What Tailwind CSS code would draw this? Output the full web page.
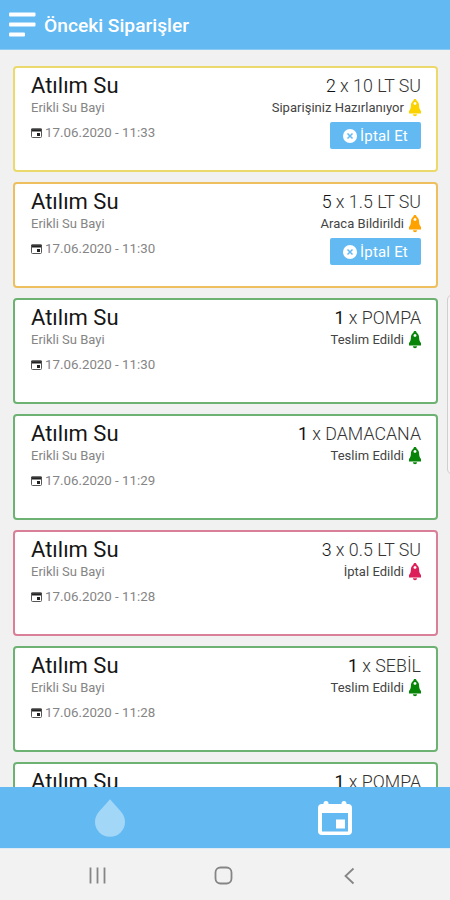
<!DOCTYPE html>
<html lang="tr">
<head>
    <meta charset="UTF-8">
    <meta name="viewport" content="width=device-width, initial-scale=1.0">
    <title>Önceki Siparişler</title>
    <script src="https://cdn.jsdelivr.net/npm/@tailwindcss/browser@4"></script>
</head>
<body class="bg-[#f1f1f1] font-['Roboto',sans-serif]">

    <div class="relative flex flex-col w-[450px] h-[900px] overflow-hidden">
        <!-- Header -->
        <header class="flex shrink-0 items-center h-[50px] bg-[#63b9f2] border-b border-[#8ecbf4] pl-[9px] gap-[9px]">
            <svg class="w-[27px] h-[25px]" viewBox="0 0 27 25" fill="#fff">
                <rect x="0" y="0.500" width="26.5" height="4" rx="1" />
                <rect x="0" y="10.500" width="26.5" height="4" rx="1" />
                <rect x="0" y="20.500" width="16" height="4" rx="1" />
            </svg>
            <h1 class="-ml-px pt-[2px] text-[19.2px] leading-6 font-medium text-white whitespace-nowrap">Önceki Siparişler</h1>
        </header>

        <!-- Order list -->
        <main id="orders" class="flex flex-col flex-1 min-h-0 overflow-hidden gap-[10px] pt-4 pl-[13px] pr-3"></main>

        <!-- Edge panel handle -->
        <div class="absolute left-[447px] top-[294px] w-3 h-[181px] rounded-md border border-[#cfcfcf] bg-[#f6f6f6]"></div>

        <!-- Tab bar -->
        <nav class="flex shrink-0 h-[61px] bg-[#63b9f2]">
            <a class="flex w-[220px] justify-center pt-[12px]">
                <svg class="w-[30px] h-[38px]" viewBox="0 0 31 39" fill="#a3d7f8">
                    <path d="M15.500 0L26.500 12.500C29.500 16 31 19.500 31 23.500a15.500 15.500 0 0 1-31 0C0 19.500 1.500 16 4.500 12.500z" />
                </svg>
            </a>
            <a class="flex w-[232px] justify-center pt-[14px]">
                <svg class="w-[34px] h-[35px]" viewBox="0 0 34 35" fill="#fff">
                    <path fill-rule="evenodd" d="M5.500 3V2.500a2.500 2.500 0 0 1 5 0V3h13V2.500a2.500 2.500 0 0 1 5 0V3H30a4 4 0 0 1 4 4v23a4 4 0 0 1-4 4H4a4 4 0 0 1-4-4V7a4 4 0 0 1 4-4zM4 12V30.500h26V12z" />
                    <rect x="18" y="18.500" width="9" height="9" />
                </svg>
            </a>
        </nav>

        <!-- System navigation -->
        <footer class="flex shrink-0 h-[52px] items-center bg-[#f2f2f2] border-t border-[#dcebf6] pl-[89px] pt-[2px]">
            <svg class="w-[17px] h-[17px]" viewBox="0 0 17 17" stroke="#858585" stroke-width="1.800">
                <path d="M1.500 0.500v16M8.500 0.500v16M15.500 0.500v16" />
            </svg>
            <svg class="w-[19px] h-[19px] ml-[108px]" viewBox="0 0 19 19" fill="none" stroke="#858585" stroke-width="1.800">
                <rect x="1.500" y="1.500" width="16" height="16" rx="5" />
            </svg>
            <svg class="w-[11px] h-[18px] ml-[111px]" viewBox="0 0 11 18" fill="none" stroke="#858585" stroke-width="1.800">
                <path d="M9.500 1.500L1.500 9l8 7.500" />
            </svg>
        </footer>
    </div>

    <script>
        const statuses = {
            preparing: { label: 'Siparişiniz Hazırlanıyor', border: 'border-[#ecd96c]', icon: 'text-[#fbd300]', cancel: true },
            onVehicle: { label: 'Araca Bildirildi', border: 'border-[#eebf5e]', icon: 'text-[#ffa200]', cancel: true },
            delivered: { label: 'Teslim Edildi', border: 'border-[#6db272]', icon: 'text-[#088508]' },
            cancelled: { label: 'İptal Edildi', border: 'border-[#d97f98]', icon: 'text-[#dc1f58]' },
        };

        const orders = [
            { amount: 2, product: '10 LT SU', time: '11:33', status: 'preparing' },
            { amount: 5, product: '1.5 LT SU', time: '11:30', status: 'onVehicle' },
            { amount: 1, product: 'POMPA', time: '11:30', status: 'delivered' },
            { amount: 1, product: 'DAMACANA', time: '11:29', status: 'delivered' },
            { amount: 3, product: '0.5 LT SU', time: '11:28', status: 'cancelled' },
            { amount: 1, product: 'SEBİL', time: '11:28', status: 'delivered' },
            { amount: 1, product: 'POMPA', time: '11:27', status: 'delivered' },
        ];

        const cancelButton = `
            <button class="flex items-center justify-center gap-[3px] w-[91px] h-[27px] mt-[5px] rounded-[2px] bg-[#63b9f2] text-white text-[15px] tracking-[0.2px]">
                <svg class="w-[14px] h-[14px]" viewBox="0 0 14 14">
                    <circle cx="7" cy="7" r="7" fill="#fff" />
                    <path d="M4.500 4.500l5 5M9.500 4.500l-5 5" stroke="#63b9f2" stroke-width="1.500" />
                </svg>
                <span class="pt-px">İptal Et</span>
            </button>`;

        // Render the order cards
        document.getElementById('orders').innerHTML = orders.map(order => {
            const status = statuses[order.status];
            return `
                <div class="flex shrink-0 justify-between h-[106px] rounded-[4px] border-2 bg-white pl-4 pr-[15px] pt-[5px] whitespace-nowrap ${status.border}">
                    <div>
                        <h2 class="text-[22px] leading-[25px] text-[#161616]">Atılım Su</h2>
                        <p class="mt-px text-[13px] leading-[18px] text-[#858585]">Erikli Su Bayi</p>
                        <p class="flex items-center gap-[3px] mt-[7px] text-[13.3px] leading-[17px] text-[#858585]">
                            <svg class="w-[11px] h-[10px]" viewBox="0 0 11 10">
                                <path d="M1 0.500h9a1 1 0 0 1 1 1V3.500H0V1.500a1 1 0 0 1 1-1z" fill="#222" />
                                <rect x="0.500" y="1" width="10" height="8.500" rx="1" fill="none" stroke="#555" />
                                <rect x="6" y="5" width="3" height="3" fill="#222" />
                            </svg>
                            <span>17.06.2020 - ${order.time}</span>
                        </p>
                    </div>
                    <div class="flex flex-col items-end">
                        <p class="text-[17.8px] leading-[25px] font-light text-[#333]"><span class="${order.amount === 1 ? 'font-normal text-[#111]' : 'font-light text-[#111]'}">${order.amount}</span> x ${order.product}</p>
                        <p class="flex items-center gap-[5px] mt-px text-[13px] leading-[18px] tracking-[0.03px] text-[#444]">
                            <span>${status.label}</span>
                            <svg class="w-[12px] h-[18px] -mt-px ${status.icon}" viewBox="0 0 12 18" fill="currentColor">
                                <path fill-rule="evenodd" d="M6 0c1 0 1.500 0.700 1.700 1.700C9.300 2.700 10 4.500 10.100 6.500c0.100 2.500 0.400 3.800 1.900 5.400V14.500H0v-2.600C1.500 10.300 1.800 9 1.900 6.500 2 4.500 2.700 2.700 4.300 1.700 4.500 0.700 5 0 6 0zM6 3a1.500 1.500 0 0 0-1.500 1.500c0 1 0.700 1.300 1.500 1.300S7.500 5.500 7.500 4.500A1.500 1.500 0 0 0 6 3z" />
                                <path d="M4 15.200h4c0 1.200-0.800 2-2 2S4 16.400 4 15.200z" />
                            </svg>
                        </p>
                        ${status.cancel ? cancelButton : ''}
                    </div>
                </div>`;
        }).join('');
    </script>

</body>
</html>
